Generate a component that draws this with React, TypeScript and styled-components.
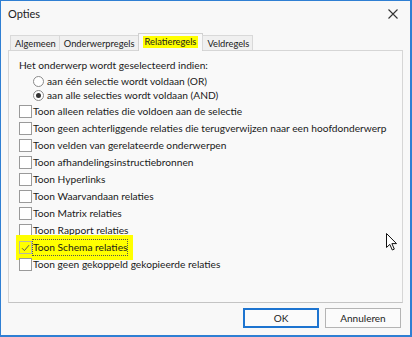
import React from "react";
import styled, { createGlobalStyle, css } from "styled-components";

const Global = createGlobalStyle`
  html, body { margin: 0; padding: 0; background: #ffffff; }
  * { box-sizing: border-box; }
`;

const Window = styled.div`
  position: relative;
  width: 412px;
  height: 337px;
  border-style: solid;
  border-color: #2f7fd3;
  border-width: 1px 2px 2px 1px;
  background: #f8f8f8;
  display: flex;
  flex-direction: column;
  font-family: Lato, "Noto Sans", sans-serif;
  font-size: 10.2px;
  color: #1a1a1a;
`;

const TitleBar = styled.div`
  height: 32px;
  flex: none;
  display: flex;
  align-items: flex-start;
  justify-content: space-between;
  padding: 5px 12px 0 7px;
`;

const Title = styled.span`
  font-size: 11px;
  line-height: 15px;
  color: #222;
`;

const CloseButton = styled.span`
  display: flex;
  margin-top: 3px;
  width: 10px;
  height: 10px;
`;

const TabRow = styled.div`
  height: 17px;
  flex: none;
  display: flex;
  align-items: flex-end;
  padding-left: 10px;
  position: relative;
  z-index: 1;
`;

const Tab = styled.div<{ $active?: boolean }>`
  height: 15px;
  padding: 0 3px 0 4px;
  display: flex;
  align-items: center;
  border: 1px solid #d9d9d9;
  border-bottom: none;
  background: #f0f0f0;
  margin-left: -1px;
  font-size: 9.3px;
  line-height: 13px;
  white-space: nowrap;
  ${(p) =>
    p.$active &&
    css`
      height: 18px;
      margin-bottom: -1px;
      padding: 0 4px 1px;
      background: #f9f9f9;
      border-color: #d0d0d0;
    `}
`;

const Marker = styled.span`
  background: #ffff00;
  padding: 0 2px;
  line-height: 12px;
`;

const Panel = styled.div`
  height: 253px;
  flex: none;
  margin: 0 7px;
  border: 1px solid #d6d6d6;
  border-bottom-color: #c4c4c4;
  background: #f9f9f9;
  padding: 7px 10px 0;
  display: flex;
  flex-direction: column;
`;

const Heading = styled.div`
  height: 14px;
  line-height: 14px;
`;

const RadioGroup = styled.div`
  padding: 2px 0 1px 14px;
  display: flex;
  flex-direction: column;
`;

const RadioRow = styled.label`
  height: 14px;
  display: flex;
  align-items: center;
  gap: 3px;
`;

const RadioDot = styled.span<{ $on?: boolean }>`
  width: 11px;
  height: 11px;
  border-radius: 50%;
  border: 1px solid #8a8a8a;
  background: #fff;
  display: flex;
  align-items: center;
  justify-content: center;
  &::after {
    content: "";
    width: 5px;
    height: 5px;
    border-radius: 50%;
    background: ${(p) => (p.$on ? "#333" : "transparent")};
  }
`;

const CheckRow = styled.div`
  height: 17px;
  display: flex;
  align-items: center;
`;

const CheckLabel = styled.label<{ $highlight?: boolean }>`
  position: relative;
  display: inline-flex;
  align-items: center;
  z-index: 0;
  ${(p) =>
    p.$highlight &&
    css`
      &::before {
        content: "";
        position: absolute;
        left: -3px;
        right: -5px;
        top: -4px;
        bottom: -4px;
        background: #ffff00;
        z-index: -1;
      }
    `}
`;

const Box = styled.span<{ $checked?: boolean }>`
  width: 13px;
  height: 13px;
  flex: none;
  border: 1px solid ${(p) => (p.$checked ? "#b8b8a0" : "#9a9a9a")};
  background: ${(p) => (p.$checked ? "transparent" : "#ffffff")};
  display: flex;
  align-items: center;
  justify-content: center;
`;

const Text = styled.span<{ $focus?: boolean }>`
  padding: 1px 0;
  line-height: 13px;
  border: 1px solid transparent;
  ${(p) =>
    p.$focus &&
    css`
      border: 1px dotted #555;
    `}
`;

const Footer = styled.div`
  flex: 1;
  display: flex;
  justify-content: flex-end;
  align-items: flex-start;
  gap: 6px;
  padding: 5px 9px 0 0;
`;

const Button = styled.button<{ $primary?: boolean }>`
  width: 76px;
  height: 20px;
  font-family: inherit;
  font-size: 10px;
  color: #222;
  background: #fbfbfb;
  border: 1px solid #b4b4b4;
  padding: 0;
  ${(p) =>
    p.$primary &&
    css`
      border: 2px solid #1d74d0;
    `}
`;

const Pointer = styled.svg`
  position: absolute;
  left: 385px;
  top: 232px;
`;

const checks: { label: string; checked?: boolean }[] = [
  { label: "Toon alleen relaties die voldoen aan de selectie" },
  { label: "Toon geen achterliggende relaties die terugverwijzen naar een hoofdonderwerp" },
  { label: "Toon velden van gerelateerde onderwerpen" },
  { label: "Toon afhandelingsinstructiebronnen" },
  { label: "Toon Hyperlinks" },
  { label: "Toon Waarvandaan relaties" },
  { label: "Toon Matrix relaties" },
  { label: "Toon Rapport relaties" },
  { label: "Toon Schema relaties", checked: true },
  { label: "Toon geen gekoppeld gekopieerde relaties" },
];

export default function App() {
  return (
    <>
      <Global />
      <Window>
        <TitleBar>
          <Title>Opties</Title>
          <CloseButton>
            <svg width="10" height="10" viewBox="0 0 10 10">
              <path d="M0.5 0.5 L9.5 9.5 M9.5 0.5 L0.5 9.5" stroke="#333" strokeWidth="1.1" />
            </svg>
          </CloseButton>
        </TitleBar>
        <TabRow>
          <Tab>Algemeen</Tab>
          <Tab>Onderwerpregels</Tab>
          <Tab $active>
            <Marker>Relatieregels</Marker>
          </Tab>
          <Tab>Veldregels</Tab>
        </TabRow>
        <Panel>
          <Heading>Het onderwerp wordt geselecteerd indien:</Heading>
          <RadioGroup>
            <RadioRow>
              <RadioDot />
              aan één selectie wordt voldaan (OR)
            </RadioRow>
            <RadioRow>
              <RadioDot $on />
              aan alle selecties wordt voldaan (AND)
            </RadioRow>
          </RadioGroup>
          {checks.map((c) => (
            <CheckRow key={c.label}>
              <CheckLabel $highlight={c.checked}>
                <Box $checked={c.checked}>
                  {c.checked && (
                    <svg width="9" height="8" viewBox="0 0 9 8">
                      <path d="M1 4.2 L3.4 6.6 L8 1.2" stroke="#555" strokeWidth="1" fill="none" />
                    </svg>
                  )}
                </Box>
                <Text $focus={c.checked}>{c.label}</Text>
              </CheckLabel>
            </CheckRow>
          ))}
        </Panel>
        <Footer>
          <Button $primary>OK</Button>
          <Button>Annuleren</Button>
        </Footer>
        <Pointer width="12" height="18" viewBox="0 0 12 18">
          <path
            d="M0.5 0.5 L0.5 14.5 L3.8 11.4 L6.3 17 L8.3 16.1 L5.9 10.6 L10.5 10.6 Z"
            fill="#fff"
            stroke="#111"
            strokeWidth="1"
            strokeLinejoin="round"
          />
        </Pointer>
      </Window>
    </>
  );
}
